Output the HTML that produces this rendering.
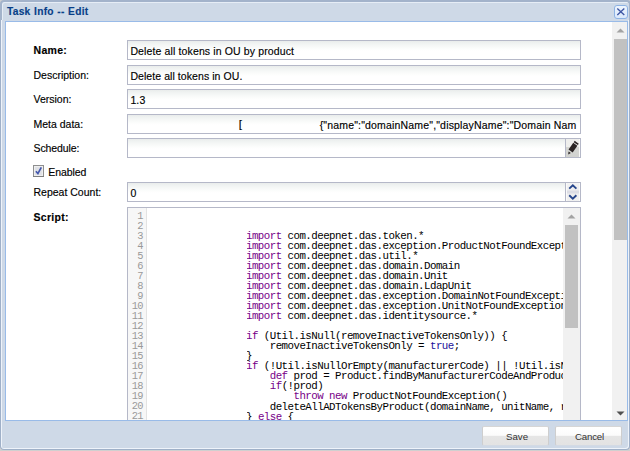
<!DOCTYPE html>
<html>
<head>
<meta charset="utf-8">
<title>Task Info -- Edit</title>
<style>
html,body{margin:0;padding:0;}
body{-webkit-text-stroke:0.15px;width:630px;height:451px;overflow:hidden;background:#d0d0d0;position:relative;font-family:"Liberation Sans",sans-serif;}
.abs{position:absolute;}
#stage{position:absolute;left:0;top:0;width:630px;height:451px;overflow:hidden;}
/* window frame */
#bodyframe{position:absolute;left:0;top:16px;width:628px;height:433px;background:#ced9e7;border:1px solid #9fb0c8;border-top:none;border-radius:0 0 4px 4px;box-shadow:inset 1px 0 0 #eef3fa, inset -1px -1px 0 #eef3fa;}
#header{position:absolute;left:0;top:0;width:627px;height:18px;background:#ced9e7;border:2px solid #a3b3cb;border-bottom:none;border-radius:4px 4px 0 0;box-shadow:inset 1px 1px 0 #e6edf6;}
#hdrfill{display:none;}
#title{position:absolute;left:7px;top:6px;font:bold 10.2px/12px "Liberation Sans",sans-serif;letter-spacing:0.27px;color:#083f88;white-space:pre;word-spacing:0.4px;}
#close{position:absolute;left:614px;top:5px;width:14px;height:14px;}
#wbody{position:absolute;left:5px;top:21px;width:621px;height:398px;border:1px solid #99bbe8;background:#fff;overflow:hidden;}
/* inside wbody coordinates are page coords minus (6,22) */
#inner{position:absolute;left:-6px;top:-22px;width:630px;height:451px;}
.lbl{position:absolute;left:33.5px;font:10.5px/12px "Liberation Sans",sans-serif;color:#000;white-space:pre;}
.lbl.b{font-weight:bold;font-size:10.5px;letter-spacing:0.3px;}
.fld{position:absolute;left:127px;width:452px;height:18px;border:1px solid #b5b8c8;background:#fff linear-gradient(#e9eceb 0,#eff2f1 2px,#f6f8f7 5px,#fcfdfc 8px,#fff 10px);}
.ftx{position:absolute;left:130.4px;font:10.5px/12px "Liberation Sans",sans-serif;letter-spacing:0.13px;color:#000;white-space:pre;}
/* scrollbars */
.track{position:absolute;background:#f1f1f1;}
.thumb{position:absolute;background:#c1c1c1;}
/* code */
#code{position:absolute;left:127px;top:207px;width:452px;height:230px;border:1px solid #b5b8c8;background:#fff;overflow:hidden;}
#gutter{position:absolute;left:0;top:0;width:18px;height:230px;background:#f7f7f7;border-right:1px solid #e3e3e3;}
.ln{position:absolute;right:3.3px;font:10.4px/10px "Liberation Mono",monospace;letter-spacing:-0.8px;color:#999;white-space:pre;text-align:right;margin-top:-0.5px;}
#lines{position:absolute;left:119px;top:0;width:316px;height:230px;overflow:hidden;}
.cl{position:absolute;left:-1px;font:10.8px/10px "Liberation Mono",monospace;letter-spacing:-0.545px;color:#000;white-space:pre;margin-top:-0.6px;}
.cl,.ln,.btx{-webkit-text-stroke:0;}
.k{color:#708;}
.a{color:#219;}
/* buttons */
.btn{position:absolute;top:426px;height:18px;border:1px solid #cecece;border-top-color:#d6d6d6;border-bottom:1px solid #d3dae4;border-radius:2px;background:linear-gradient(#ffffff 0,#fbfbfb 8px,#f6f6f6 8.6px,#e5e5e5 9.4px,#e3e3e3 100%);}
.btx{position:absolute;font:9.7px/12px "Liberation Sans",sans-serif;color:#333;white-space:pre;}
</style>
</head>
<body>
<div id="stage">
  <div id="bodyframe"></div>
  <div id="header"></div>
  <div id="hdrfill"></div>
  <div id="title">Task Info -- Edit</div>
  <svg id="close" viewBox="0 0 14 14">
    <defs><linearGradient id="cg" x1="0" y1="0" x2="0" y2="1"><stop offset="0" stop-color="#eef5fe"/><stop offset="1" stop-color="#d9e8fb"/></linearGradient></defs><rect x="0.5" y="0.5" width="13" height="13" rx="2.5" ry="2.5" fill="url(#cg)" stroke="#8db2e3"/>
    <path d="M3.3 3.5 L10.3 9.9 M10.3 3.5 L3.3 9.9" stroke="#3d55a3" stroke-width="1.35" fill="none"/>
  </svg>

  <div id="wbody"><div id="inner">
    <div class="lbl b" style="top:44px">Name:</div>
    <div class="lbl" style="top:69px">Description:</div>
    <div class="lbl" style="top:93px">Version:</div>
    <div class="lbl" style="top:118px">Meta data<span>:</span></div>
    <div class="lbl" style="top:141.5px;letter-spacing:-0.1px">Schedule:</div>
    <div class="lbl" style="top:186px">Repeat Count:</div>
    <div class="lbl b" style="top:210.5px">Script:</div>

    <div class="fld" style="top:40px"></div>
    <div class="fld" style="top:65px"></div>
    <div class="fld" style="top:89px"></div>
    <div class="fld" style="top:114px"></div>
    <div class="fld" style="top:138px"></div>
    <div class="fld" style="top:182px"></div>

    <div class="ftx" style="top:45px">Delete all tokens in OU by product</div>
    <div class="ftx" style="top:70px;letter-spacing:0.07px">Delete all tokens in OU.</div>
    <div class="ftx" style="top:94px">1.3</div>
    <div class="ftx" style="top:118px;left:238.8px;font-size:11.5px">[</div>
    <div class="ftx" style="top:119px;left:319.7px;letter-spacing:0.17px">{"name":"domainName","displayName":"Domain Nam</div>
    <div class="ftx" style="top:187px">0</div>

    <!-- checkbox -->
    <svg class="abs" style="left:33px;top:165px" width="12" height="13" viewBox="0 0 12 13">
      <rect x="0.5" y="0.5" width="10" height="11" fill="#e9eaec" stroke="#8e8f8f"/>
      <rect x="1.5" y="1.5" width="8" height="9" fill="none" stroke="#eeeeef"/>
      <rect x="2" y="2" width="7" height="8" fill="#dfe1e5"/>
      <path d="M0 11.5 H11" stroke="#7d7e7e" stroke-width="1"/>
      <path d="M2.9 6.2 L4.9 8.6 L8.3 2.4" stroke="#4357ad" stroke-width="1.7" fill="none" stroke-linejoin="miter"/>
    </svg>
    <div class="lbl" style="left:48.3px;top:165.5px;letter-spacing:-0.1px">Enabled</div>


    <!-- schedule trigger (pencil) -->
    <div class="abs" style="left:565px;top:139px;width:1px;height:18px;background:#b5b8c8"></div>
    <div class="abs" style="left:566px;top:139px;width:14px;height:18px;background:linear-gradient(#efefed 0,#eeeeec 8px,#d4d5d2 8px,#d2d3d0 18px)"></div>
    <div class="abs" style="left:579px;top:139px;width:1px;height:18px;background:#f8f8f8"></div>
    <svg class="abs" style="left:566px;top:139px" width="14" height="18" viewBox="0 0 14 18">
      <g transform="translate(6.9,8.7) rotate(35)">
        <rect x="-2.5" y="-6.6" width="5" height="1.6" fill="#2a2323"/>
        <rect x="-2.5" y="-4.2" width="5" height="8.2" fill="#2a2323"/>
        <path d="M-1.4 5.6 L1.4 5.6 L0 8.2 Z" fill="#2a2323"/>
      </g>
    </svg>
    <!-- repeat count spinner -->
    <div class="abs" style="left:565px;top:183px;width:1px;height:18px;background:#b5b8c8"></div>
    <div class="abs" style="left:566px;top:183px;width:14px;height:18px;background:linear-gradient(#f3f3f3 0,#eeeeef 7px,#dcdde5 8px,#dcdde5 10px,#eeeeef 11px,#f1f1f1 18px)"></div>
    <div class="abs" style="left:566px;top:183px;width:1px;height:18px;background:#fafafa"></div>
    <div class="abs" style="left:579px;top:183px;width:1px;height:18px;background:#fafafa"></div>
    <svg class="abs" style="left:566px;top:183px" width="14" height="18" viewBox="0 0 14 18">
      <path d="M3.2 5.6 L6.8 2.3 L10.4 5.6" stroke="#27468c" stroke-width="1.9" fill="none"/>
      <path d="M3.2 12.3 L6.8 15.6 L10.4 12.3" stroke="#27468c" stroke-width="1.9" fill="none"/>
    </svg>
    <!-- code -->
    <div id="code">
      <div id="gutter"><div class="ln" style="top:3px">1</div><div class="ln" style="top:13px">2</div><div class="ln" style="top:23px">3</div><div class="ln" style="top:33px">4</div><div class="ln" style="top:43px">5</div><div class="ln" style="top:53px">6</div><div class="ln" style="top:63px">7</div><div class="ln" style="top:73px">8</div><div class="ln" style="top:83px">9</div><div class="ln" style="top:93px">10</div><div class="ln" style="top:103px">11</div><div class="ln" style="top:113px">12</div><div class="ln" style="top:123px">13</div><div class="ln" style="top:133px">14</div><div class="ln" style="top:143px">15</div><div class="ln" style="top:153px">16</div><div class="ln" style="top:163px">17</div><div class="ln" style="top:173px">18</div><div class="ln" style="top:183px">19</div><div class="ln" style="top:193px">20</div><div class="ln" style="top:203px">21</div><div class="ln" style="top:213px">22</div></div>
      <div id="lines"><div class="cl" style="top:23.12px"><span class="k">import</span> com.deepnet.das.token.*</div><div class="cl" style="top:33.18px"><span class="k">import</span> com.deepnet.das.exception.ProductNotFoundException</div><div class="cl" style="top:43.24px"><span class="k">import</span> com.deepnet.das.util.*</div><div class="cl" style="top:53.3px"><span class="k">import</span> com.deepnet.das.domain.Domain</div><div class="cl" style="top:63.36px"><span class="k">import</span> com.deepnet.das.domain.Unit</div><div class="cl" style="top:73.42px"><span class="k">import</span> com.deepnet.das.domain.LdapUnit</div><div class="cl" style="top:83.48px"><span class="k">import</span> com.deepnet.das.exception.DomainNotFoundException</div><div class="cl" style="top:93.54px"><span class="k">import</span> com.deepnet.das.exception.UnitNotFoundException</div><div class="cl" style="top:103.6px"><span class="k">import</span> com.deepnet.das.identitysource.*</div><div class="cl" style="top:123.72px"><span class="k">if</span> (Util.isNull(removeInactiveTokensOnly)) {</div><div class="cl" style="top:133.78px">    removeInactiveTokensOnly = <span class="a">true</span>;</div><div class="cl" style="top:143.84px">}</div><div class="cl" style="top:153.9px"><span class="k">if</span> (!Util.isNullOrEmpty(manufacturerCode) || !Util.isNullOrEmpty(productCode)) {</div><div class="cl" style="top:163.96px">    <span class="k">def</span> prod = Product.findByManufacturerCodeAndProductCode(manufacturerCode, productCode)</div><div class="cl" style="top:174.02px">    <span class="k">if</span>(!prod)</div><div class="cl" style="top:184.08px">        <span class="k">throw</span> <span class="k">new</span> ProductNotFoundException()</div><div class="cl" style="top:194.14px">    deleteAllADTokensByProduct(domainName, unitName, removeInactiveTokensOnly, prod)</div><div class="cl" style="top:204.2px">} <span class="k">else</span> {</div><div class="cl" style="top:214.26px">    deleteAllADTokens(domainName, unitName, removeInactiveTokensOnly)</div></div>
      <div class="track" style="left:435px;top:0;width:17px;height:230px"></div>
      <div class="thumb" style="left:437px;top:17px;width:13px;height:103px"></div>
      <svg class="abs" style="left:439px;top:6.4px" width="9" height="5" viewBox="0 0 9 5"><path d="M0.5 4.5 L4.5 0.5 L8.5 4.5 Z" fill="#a3a3a3"/></svg>
    </div>

    <!-- outer scrollbar -->
    <div class="track" style="left:612px;top:22px;width:15px;height:398px"></div>
    <div class="thumb" style="left:614px;top:39px;width:13px;height:201px"></div>
    <svg class="abs" style="left:616px;top:28.4px" width="9" height="5" viewBox="0 0 9 5"><path d="M0.5 4.5 L4.5 0.5 L8.5 4.5 Z" fill="#a3a3a3"/></svg>
    <svg class="abs" style="left:616px;top:410.6px" width="9" height="5" viewBox="0 0 9 5"><path d="M0.5 0.5 L4.5 4.5 L8.5 0.5 Z" fill="#505050"/></svg>
  </div></div>

  <div class="btn" style="left:482px;width:65px"></div>
  <div class="btn" style="left:555px;width:65px"></div>
  <div class="btx" style="left:506px;top:430.8px">Save</div>
  <div class="btx" style="left:575px;top:430.8px;letter-spacing:-0.2px">Cancel</div>
</div>
</body>
</html>
